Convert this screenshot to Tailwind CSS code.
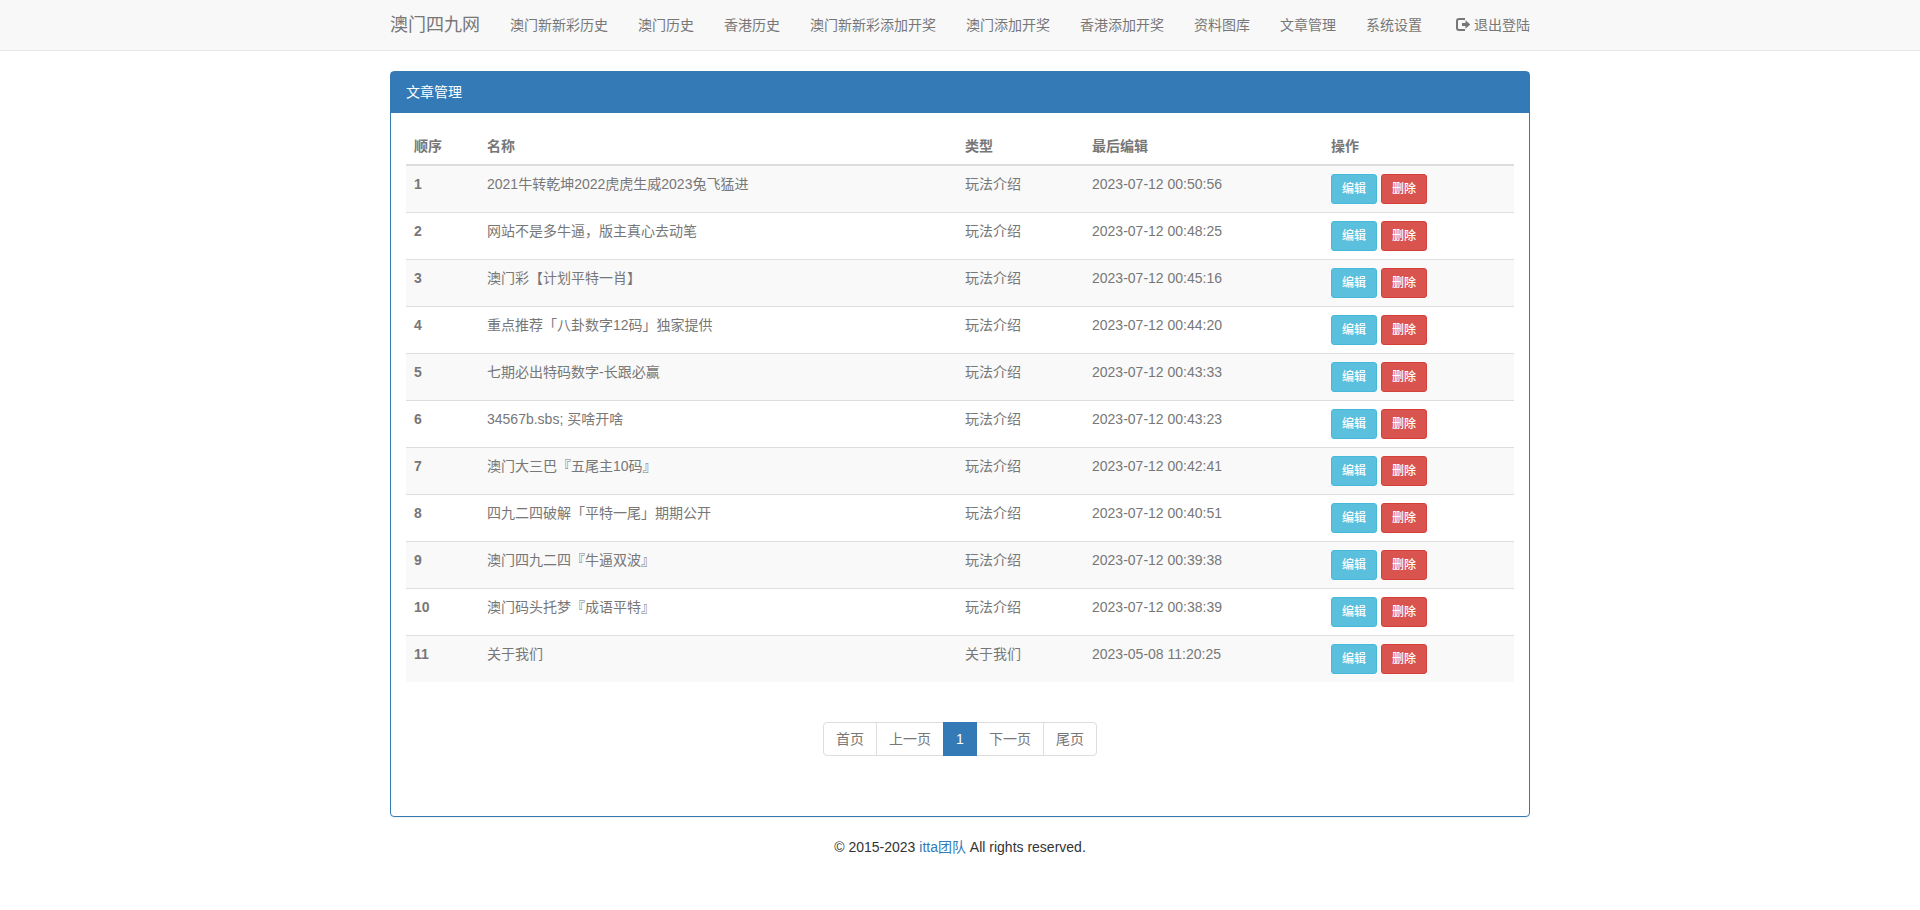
<!DOCTYPE html>
<html lang="zh-CN">
<head>
    <meta charset="UTF-8">
    <meta name="viewport" content="width=device-width, initial-scale=1">
    <title>文章管理</title>
    <script src="https://cdn.jsdelivr.net/npm/@tailwindcss/browser@4"></script>
</head>
<body class="bg-white font-['Liberation_Sans','Noto_Sans_CJK_SC',sans-serif] text-sm leading-5 text-[#333]">

    <!-- Navbar -->
    <nav class="bg-[#f8f8f8] border-b border-[#e7e7e7] mb-5">
        <div class="max-w-[1170px] mx-auto flex flex-wrap items-center text-[#777]">
            <a href="#" class="p-[15px] text-lg leading-5 hover:text-[#5e5e5e]">澳门四九网</a>
            <ul class="flex flex-wrap">
                <li><a href="#" class="block p-[15px] hover:text-[#333]">澳门新新彩历史</a></li>
                <li><a href="#" class="block p-[15px] hover:text-[#333]">澳门历史</a></li>
                <li><a href="#" class="block p-[15px] hover:text-[#333]">香港历史</a></li>
                <li><a href="#" class="block p-[15px] hover:text-[#333]">澳门新新彩添加开奖</a></li>
                <li><a href="#" class="block p-[15px] hover:text-[#333]">澳门添加开奖</a></li>
                <li><a href="#" class="block p-[15px] hover:text-[#333]">香港添加开奖</a></li>
                <li><a href="#" class="block p-[15px] hover:text-[#333]">资料图库</a></li>
                <li><a href="#" class="block p-[15px] hover:text-[#333]">文章管理</a></li>
                <li><a href="#" class="block p-[15px] hover:text-[#333]">系统设置</a></li>
            </ul>
            <a href="#" class="ml-auto flex items-center gap-1 p-[15px] hover:text-[#333]">
                <svg class="size-[14px]" viewBox="0 0 14 14" fill="currentColor" aria-hidden="true">
                    <path d="M3 0h6v2H3.200Q2 2 2 3.200v6.600Q2 11 3.200 11H9v2H3q-3 0-3-3V3Q0 0 3 0z"/>
                    <path d="M9.500 2.300 14.200 6.500 9.500 10.700V8H6V5h3.500z"/>
                </svg>
                退出登陆
            </a>
        </div>
    </nav>

    <div class="max-w-[1170px] mx-auto px-[15px]">
        <!-- Article panel -->
        <div class="border border-[#337ab7] rounded mb-5 shadow-[0_1px_1px_rgba(0,0,0,0.05)]">
            <div class="bg-[#337ab7] text-white px-[15px] py-[10px] border-b border-[#337ab7]">文章管理</div>
            <div class="p-[15px] text-[#777]">
                <table class="w-full table-fixed border-collapse mb-5">
                    <thead>
                        <tr class="text-left border-b-2 border-[#ddd]">
                            <th class="p-2 w-[73px]">顺序</th>
                            <th class="p-2">名称</th>
                            <th class="p-2 w-[127px]">类型</th>
                            <th class="p-2 w-[239px]">最后编辑</th>
                            <th class="p-2 w-[191px]">操作</th>
                        </tr>
                    </thead>
                    <tbody id="articles"></tbody>
                </table>

                <!-- Pagination -->
                <div class="flex justify-center pt-5 pb-[45px]">
                    <a href="#" class="border border-[#ddd] rounded-l px-3 py-[6px] hover:bg-[#eee]">首页</a>
                    <a href="#" class="border border-[#ddd] -ml-px px-3 py-[6px] hover:bg-[#eee]">上一页</a>
                    <a href="#" class="border border-[#337ab7] bg-[#337ab7] text-white -ml-px px-3 py-[6px] z-10" aria-current="page">1</a>
                    <a href="#" class="border border-[#ddd] -ml-px px-3 py-[6px] hover:bg-[#eee]">下一页</a>
                    <a href="#" class="border border-[#ddd] rounded-r -ml-px px-3 py-[6px] hover:bg-[#eee]">尾页</a>
                </div>
            </div>
        </div>

        <footer class="text-center">
            © 2015-2023 <a href="#" class="text-[#337ab7] hover:underline">itta团队</a> All rights reserved.
        </footer>
    </div>

    <script>
        const articles = [
            ['2021牛转乾坤2022虎虎生威2023兔飞猛进', '玩法介绍', '2023-07-12 00:50:56'],
            ['网站不是多牛逼，版主真心去动笔', '玩法介绍', '2023-07-12 00:48:25'],
            ['澳门彩【计划平特一肖】', '玩法介绍', '2023-07-12 00:45:16'],
            ['重点推荐「八卦数字12码」独家提供', '玩法介绍', '2023-07-12 00:44:20'],
            ['七期必出特码数字-长跟必赢', '玩法介绍', '2023-07-12 00:43:33'],
            ['34567b.sbs; 买啥开啥', '玩法介绍', '2023-07-12 00:43:23'],
            ['澳门大三巴『五尾主10码』', '玩法介绍', '2023-07-12 00:42:41'],
            ['四九二四破解「平特一尾」期期公开', '玩法介绍', '2023-07-12 00:40:51'],
            ['澳门四九二四『牛逼双波』', '玩法介绍', '2023-07-12 00:39:38'],
            ['澳门码头托梦『成语平特』', '玩法介绍', '2023-07-12 00:38:39'],
            ['关于我们', '关于我们', '2023-05-08 11:20:25'],
        ];

        document.getElementById('articles').innerHTML = articles.map(([name, type, edited], i) => `
            <tr class="align-top border-t border-[#ddd] first:border-t-2 odd:bg-[#f9f9f9]">
                <th scope="row" class="p-2 text-left">${i + 1}</th>
                <td class="p-2">${name}</td>
                <td class="p-2">${type}</td>
                <td class="p-2">${edited}</td>
                <td class="p-2">
                    <div class="flex gap-1">
                        <button type="button" class="border border-[#46b8da] bg-[#5bc0de] hover:bg-[#31b0d5] text-white text-xs leading-[18px] font-medium rounded-[3px] px-[10px] py-[5px]">编辑</button>
                        <button type="button" class="border border-[#d43f3a] bg-[#d9534f] hover:bg-[#c9302c] text-white text-xs leading-[18px] font-medium rounded-[3px] px-[10px] py-[5px]">删除</button>
                    </div>
                </td>
            </tr>`).join('');
    </script>
</body>
</html>
